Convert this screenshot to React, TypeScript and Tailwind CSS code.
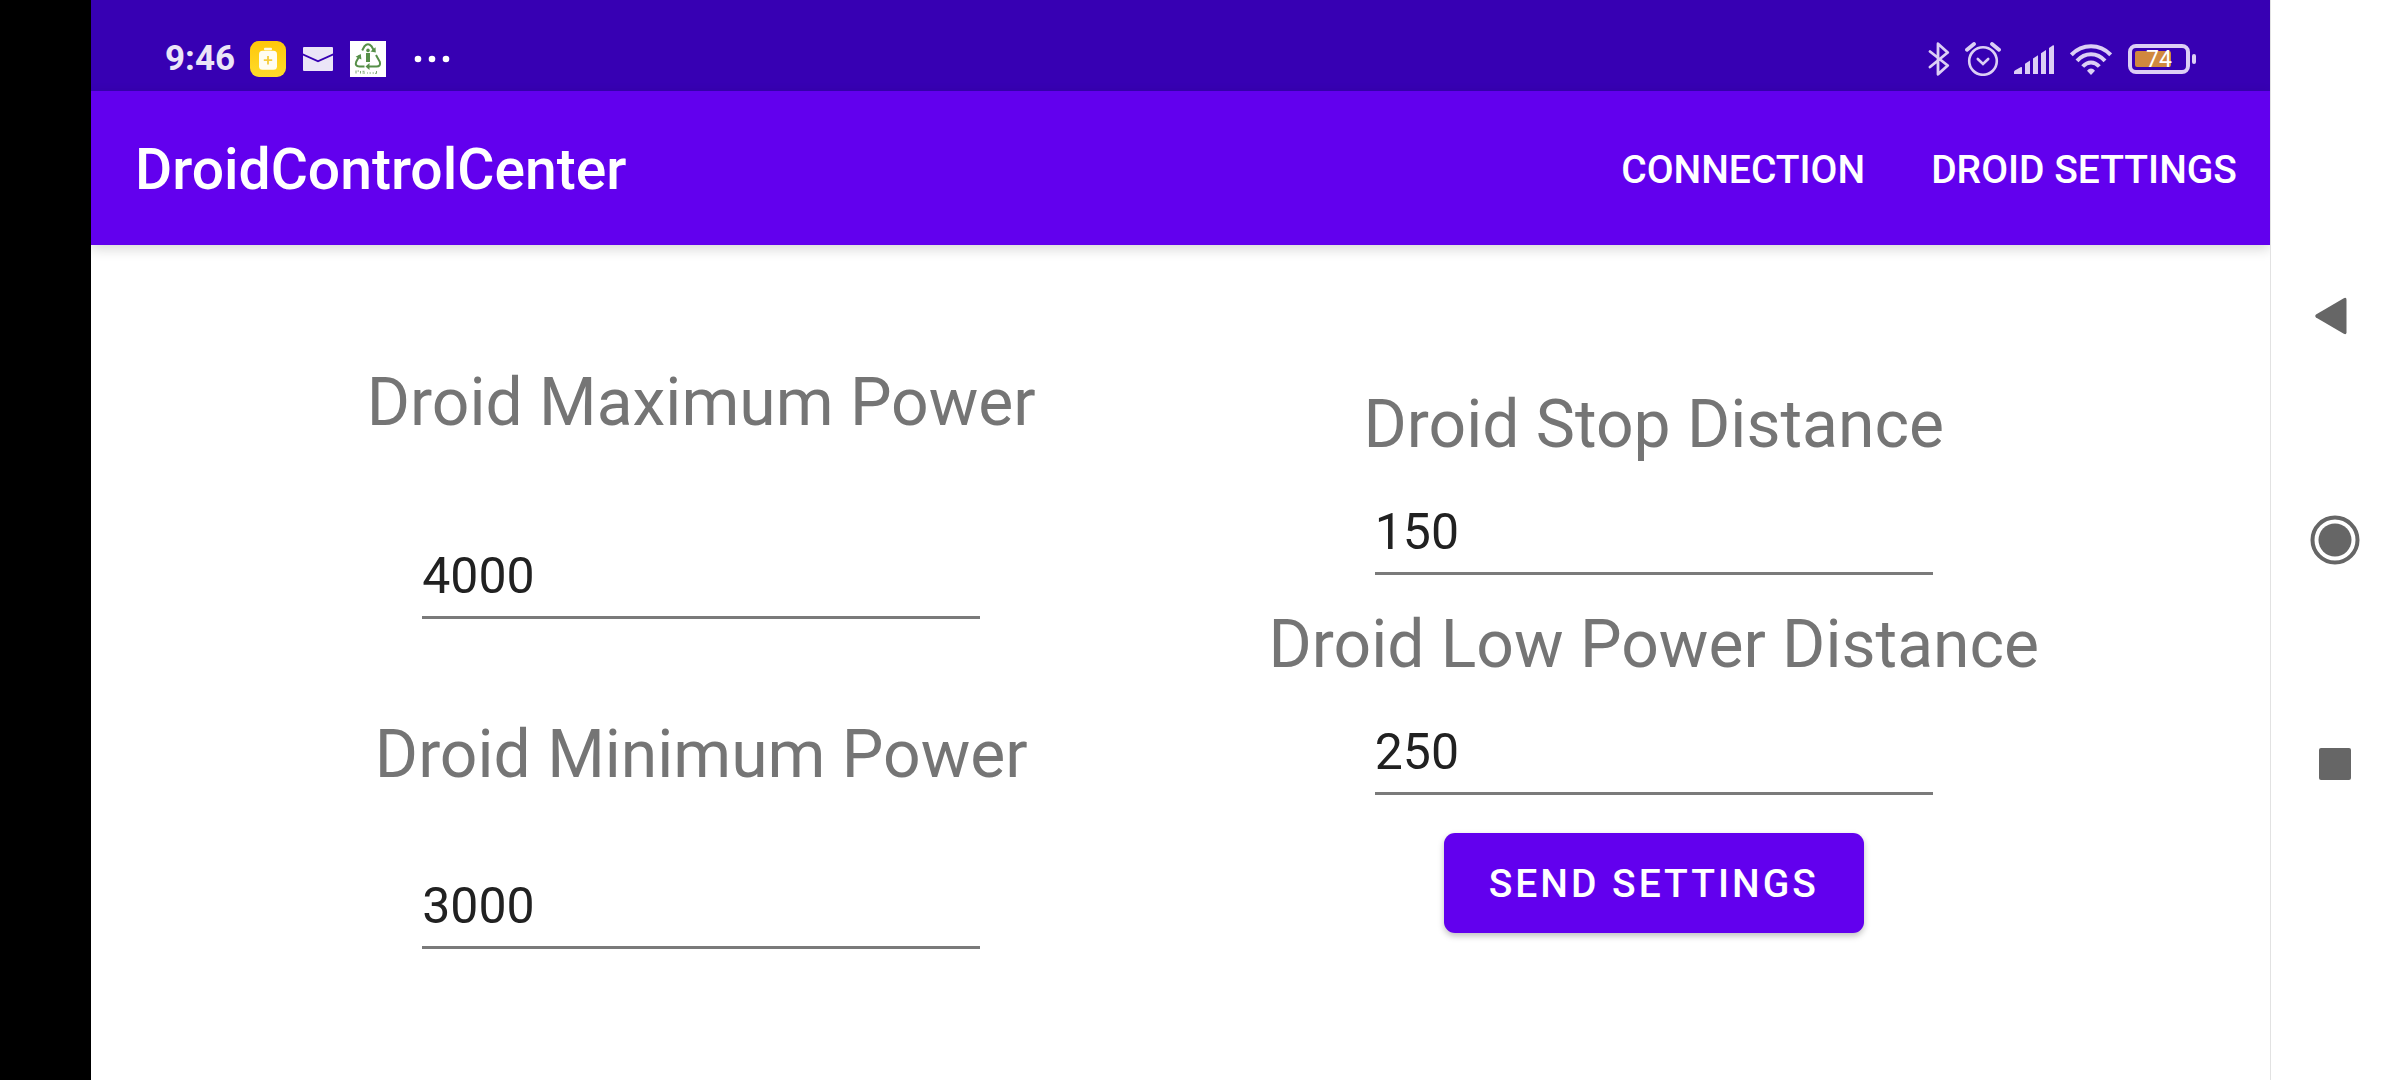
import React, { useState } from "react";

function StatusBar() {
  return (
    <div className="flex h-[91px] items-start justify-between bg-[#3700b3] pt-[38px] pr-[74px] pl-[74px]">
      <div className="flex h-[42px] items-center">
        <span className="text-[35px] leading-[44px] font-bold text-[#ebe5f7]">9:46</span>
        <svg className="ml-[15px] h-9 w-9" viewBox="0 0 36 36" aria-hidden="true">
          <defs>
            <linearGradient id="cleaner" x1="0" y1="0" x2="0" y2="1">
              <stop offset="0" stopColor="#ffc70a" />
              <stop offset="1" stopColor="#ffdb2b" />
            </linearGradient>
          </defs>
          <rect width="36" height="36" rx="9" fill="url(#cleaner)" />
          <rect x="14" y="6.7" width="8" height="2.5" rx="1" fill="#fffbe6" />
          <rect x="9" y="9.7" width="18" height="19" rx="3.5" fill="#fffdf2" />
          <path d="M18 15v8.4M13.8 19.2h8.4" stroke="#f6cd3c" strokeWidth="1.8" />
        </svg>
        <svg className="ml-[17px] h-6 w-[30px]" viewBox="0 0 30 24" fill="#ebe5f7" aria-hidden="true">
          <path d="M1 0h28a1 1 0 0 1 1 1v5.600L15 13.200 0 6.600V1a1 1 0 0 1 1-1z" />
          <path d="M0 8.400l15 6.800L30 8.400V23a1 1 0 0 1-1 1H1a1 1 0 0 1-1-1z" />
        </svg>
        <svg className="ml-[17px] h-9 w-9" viewBox="0 0 36 36" fill="none" aria-hidden="true">
          <rect width="36" height="36" fill="#fff" />
          <g stroke="#568f48" strokeWidth="2">
            <path d="M12.200 9.500 14.500 5.200Q18 1.500 21.500 5.200L23.600 9" />
            <path d="M26 14l3.800 6.800Q31 25.500 26.500 25.500H18" />
            <path d="M14.500 25.500H9.500Q4.500 25 6.200 20.800L9.800 14.500" />
          </g>
          <g fill="#568f48">
            <path d="M20.500 10.500 25.800 11.400 25.500 6.300z" />
            <path d="M19.500 22v7l-4-3.500z" />
            <path d="M5.600 15.800l5.200-2.700.6 5.500z" />
            <rect x="16" y="12" width="4" height="9" />
            <circle cx="18" cy="9.400" r="1.800" />
          </g>
          <path
            d="M6 32.500v-3M7.500 30h1.500M10.500 30v2.500M12.500 30.300h2M12.500 32h2.500M17 32h1M19.500 32h1.500M22.500 32h1.500M25 32.300h1.500M26.500 30v2.500"
            stroke="#7ea873"
            strokeWidth="1"
          />
        </svg>
        <svg className="ml-7 h-[8px] w-[36px]" viewBox="0 0 36 8" fill="#fff" aria-hidden="true">
          <circle cx="4" cy="4" r="3.300" />
          <circle cx="18" cy="4" r="3.300" />
          <circle cx="32" cy="4" r="3.300" />
        </svg>
      </div>

      <div className="flex h-[42px] items-center text-[#dccff5]">
        <svg className="h-[34px] w-[22px]" viewBox="0 0 22 34" fill="none" stroke="currentColor" strokeWidth="2.800" strokeLinejoin="round" strokeLinecap="round" aria-hidden="true">
          <path d="M2 9.500 19.700 23.500 10 32.300V1.700L19.700 10.500 2 25" />
        </svg>
        <svg className="ml-[15px] h-[34px] w-9" viewBox="0 0 36 34" fill="none" stroke="currentColor" aria-hidden="true">
          <circle cx="18" cy="19" r="13.800" strokeWidth="2.600" />
          <path d="M12.800 17l5.200 5 5.200-5" strokeWidth="2.600" strokeLinecap="round" />
          <path d="M2 7.800 9 2M27 2l7 5.800" strokeWidth="3.800" strokeLinecap="round" />
        </svg>
        <svg className="ml-[13px] h-[29px] w-10" viewBox="0 0 40 29" fill="currentColor" aria-hidden="true">
          <path d="M0 29v-2Q0 26 1.200 25.200L7 22q1-.4 1 .6V29z" />
          <path d="M11 29V18.800L16 15.600V29z" />
          <path d="M19 29V13.400L24 10.200V29z" />
          <path d="M27 29V8.200L32 5V29z" />
          <path d="M35 29V3l4-2.700Q40 0 40 .8V29z" />
        </svg>
        <svg className="ml-4 h-[31px] w-[42px]" viewBox="0 0 42 31" fill="none" stroke="currentColor" strokeWidth="4" aria-hidden="true">
          <path d="M1.300 10.800Q9.500 2.200 21 2.200t19.700 8.600" />
          <path d="M7 16.800Q13 10.200 21 10.200t14 6.600" />
          <path d="M12.700 22.500Q16.500 18.400 21 18.400t8.300 4.100" />
          <path d="M21 31l-4-4.200Q18.700 24.600 21 24.600t4 2.200z" fill="currentColor" stroke="none" />
        </svg>
        <div className="ml-4 flex items-center">
          <div className="relative flex h-[30px] w-[62px] items-center rounded-[8px] border-4 border-[#dccff5] px-[3px]">
            <div className="h-4 w-9 rounded-[2px] bg-[#d0883f]" />
            <span className="absolute inset-0 text-center text-[23px] leading-[23px] text-white">74</span>
          </div>
          <div className="ml-[2px] h-[10px] w-1 rounded-sm bg-[#dccff5]" />
        </div>
      </div>
    </div>
  );
}

function Toolbar() {
  return (
    <header className="flex h-[154px] items-center justify-between bg-[#6200ee] pt-1 pr-[33px] pl-11 text-white shadow-[0_4px_12px_rgba(0,0,0,0.16)]">
      <h1 className="text-[57px] leading-[64px] font-medium">DroidControlCenter</h1>
      <nav className="flex gap-[66px] text-[39px] leading-[46px] font-medium">
        <button type="button" className="uppercase">Connection</button>
        <button type="button" className="uppercase">Droid Settings</button>
      </nav>
    </header>
  );
}

function Field({ id, label, initial, gap }: { id: string; label: string; initial: string; gap: string }) {
  const [value, setValue] = useState(initial);
  return (
    <div className={`flex flex-col items-center ${gap}`}>
      <label htmlFor={id} className="text-[66px] leading-[80px] whitespace-nowrap text-[#757575]">
        {label}
      </label>
      <input
        id={id}
        type="text"
        inputMode="numeric"
        value={value}
        onChange={(e) => setValue(e.target.value)}
        className="h-[73px] w-[558px] border-b-[3px] border-[#7a7a7a] bg-transparent pb-[10px] text-[50px] leading-[60px] text-[#212121] outline-none"
      />
    </div>
  );
}

function NavigationBar() {
  return (
    <nav aria-label="System" className="flex w-[130px] shrink-0 flex-col justify-center border-l border-[#e2e2e2] bg-white pr-px text-[#666]">
      <button type="button" aria-label="Back" className="flex h-56 items-center justify-center pr-2">
        <svg className="h-[38px] w-8" viewBox="0 0 32 38" fill="currentColor">
          <path d="M1 17.600 28.800 1.200Q31.500 0 31.500 2.800V35.200Q31.500 38 28.800 36.800L1 20.400Q-.5 19 1 17.600z" />
        </svg>
      </button>
      <button type="button" aria-label="Home" className="flex h-56 items-center justify-center">
        <svg className="h-[50px] w-[50px]" viewBox="0 0 50 50">
          <circle cx="25" cy="25" r="22.500" fill="none" stroke="currentColor" strokeWidth="4" />
          <circle cx="25" cy="25" r="16.500" fill="currentColor" />
        </svg>
      </button>
      <button type="button" aria-label="Recent apps" className="flex h-56 items-center justify-center">
        <span className="h-8 w-8 rounded-[2px] bg-[#666]" />
      </button>
    </nav>
  );
}

export default function App() {
  return (
    <div className="flex min-h-screen bg-white font-['Roboto',sans-serif]">
      <div className="w-[91px] shrink-0 bg-black" />
      <div className="flex min-w-0 flex-1 flex-col">
        <StatusBar />
        <Toolbar />
        <main className="grid grid-cols-2 pr-[140px] pl-[134px]">
          <form className="flex flex-col gap-[96px] pt-[118px]">
            <Field id="max-power" label="Droid Maximum Power" initial="4000" gap="gap-[103px]" />
            <Field id="min-power" label="Droid Minimum Power" initial="3000" gap="gap-[81px]" />
          </form>
          <form className="flex flex-col items-center pt-[140px]" onSubmit={(e) => e.preventDefault()}>
            <div className="flex flex-col gap-[30px]">
              <Field id="stop-distance" label="Droid Stop Distance" initial="150" gap="gap-[37px]" />
              <Field id="low-power-distance" label="Droid Low Power Distance" initial="250" gap="gap-[37px]" />
            </div>
            <button
              type="submit"
              className="mt-[38px] h-[100px] rounded-[11px] bg-[#6200ee] px-[45px] pt-[2px] text-[39px] font-medium tracking-[3px] text-white uppercase shadow-[0_3px_6px_rgba(0,0,0,0.25)]"
            >
              Send Settings
            </button>
          </form>
        </main>
      </div>
      <NavigationBar />
    </div>
  );
}
